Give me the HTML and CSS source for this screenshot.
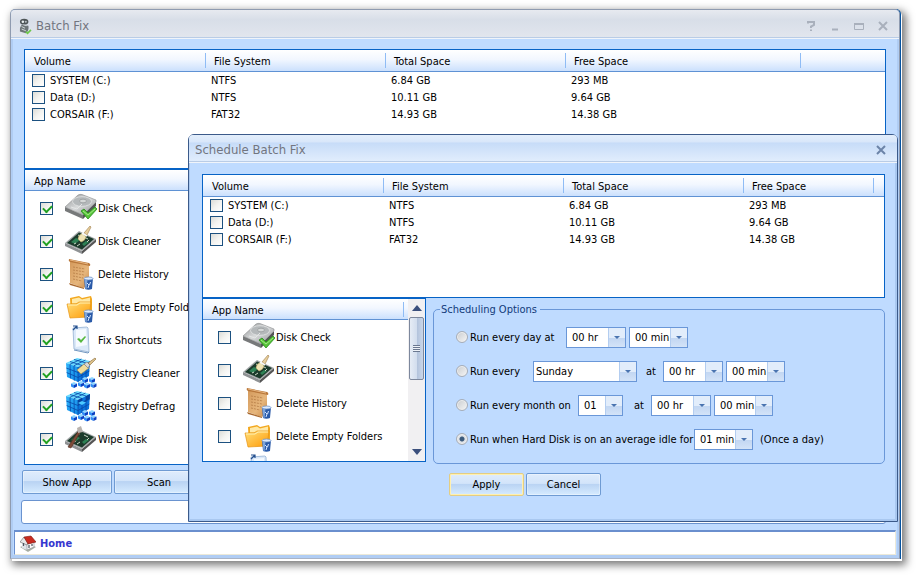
FILE: index.html
```html
<!DOCTYPE html>
<html lang="en">
<head>
<meta charset="UTF-8">
<title>Batch Fix</title>
<link rel="stylesheet" href="styles.css">
</head>
<body>
<!-- icon set -->
<svg class="sprite" aria-hidden="true">
    <defs>
        <linearGradient id="metal" x1="0" y1="0" x2="1" y2="1">
            <stop offset="0" stop-color="#8f9192"/><stop offset=".5" stop-color="#d8dadb"/><stop offset="1" stop-color="#8b8e90"/>
        </linearGradient>
        <linearGradient id="paper" x1="0" y1="0" x2="1" y2="1">
            <stop offset="0" stop-color="#d49a5c"/><stop offset=".6" stop-color="#e6b67c"/><stop offset="1" stop-color="#c98a4a"/>
        </linearGradient>
        <linearGradient id="gold" x1="0" y1="0" x2="1" y2="1">
            <stop offset="0" stop-color="#ffdf7a"/><stop offset="1" stop-color="#ff9a05"/>
        </linearGradient>
        <linearGradient id="cubeLeft" x1="0" y1="0" x2="1" y2="1">
            <stop offset="0" stop-color="#2fb4fa"/><stop offset="1" stop-color="#1288e6"/>
        </linearGradient>
        <g id="bin">
            <path d="M19 20h9l-1 11q-3.500 1.500-7 0z" fill="#2a5aa8"/>
            <path d="M19.500 22h3l-1 9h-1z" fill="#7ea6dc"/>
            <ellipse cx="23.500" cy="20.500" rx="4.500" ry="1.500" fill="#dcebff" stroke="#6f93c8" stroke-width=".8"/>
            <path d="M22 25l2 2-1 3M25.500 24l-1 3" stroke="#d4e6ff" fill="none"/>
        </g>
        <g id="smallcube">
            <path d="M0 1.500L3 0l3 1.500L3 3z" fill="#8fd6ff"/>
            <path d="M0 1.500L3 3v3L0 4.500z" fill="#2f8cf5"/>
            <path d="M6 1.500L3 3v3l3-1.500z" fill="#0c3fc0"/>
        </g>
        <g id="cubes">
            <path d="M1 6l11-5 13 3-12 6z" fill="#6cdcff"/>
            <path d="M1 6l12 4v15L2 20z" fill="url(#cubeLeft)"/>
            <path d="M13 10l12-6-1 15-11 6z" fill="#0b74dc"/>
            <path d="M5 7.300l.5 14M9 8.700l.3 15M1.300 11l11.700 4.500L24.700 9M1.600 15.500L13 20.500l11.400-6.500M17 8v15M21 6v15M5 4.500l12 4M9 2.500l12 3.500M5 7.300L16.500 2M9 8.700L20.500 3M13 10v15" stroke="#0848a8" stroke-width=".8" fill="none"/>
            <use href="#smallcube" x="17" y="20"/><use href="#smallcube" x="24" y="20"/>
            <use href="#smallcube" x="6" y="25"/><use href="#smallcube" x="13" y="24"/>
            <use href="#smallcube" x="19" y="25.500"/><use href="#smallcube" x="25.500" y="25"/>
        </g>
        <g id="board">
            <path d="M0 18l17 8v3L0 21z" fill="#8f9294"/>
            <path d="M17 26l14-12v3L17 29z" fill="#555"/>
            <path d="M0 18L14 6l17 8-14 12z" fill="#a5a9aa"/>
            <path d="M2 18L14 7.500 29 14 17 24.500z" fill="#1c3b2c"/>
            <path d="M6 17l5-4 4 2-5 4zM17 19l4-3 3 1-5 4z" fill="#2e8255"/>
            <path d="M9 19l2-1M12 21l3-2M19 12l4 2M13 10l2 1M22 17l2-2" stroke="#c9d6c4"/>
        </g>
    </defs>
    <symbol id="ic-check" viewBox="0 0 32 32">
        <path d="M0 15l18 8v4L0 19z" fill="#77797a"/>
        <path d="M18 23l13-13v4L18 27z" fill="#545657"/>
        <path d="M0 15L13 3q2-1 4-.500L31 8v2L18 23z" fill="url(#metal)" stroke="#8a8c8d" stroke-width=".6"/>
        <ellipse cx="17" cy="9.500" rx="9.500" ry="4.800" fill="#b4b8ba" stroke="#e6e8e8" stroke-width=".7"/>
        <ellipse cx="18" cy="9" rx="3.500" ry="1.800" fill="#d5d8d8" stroke="#8b8f91" stroke-width=".6"/>
        <path d="M6 15l6 2 5-5" stroke="#e4e6e6" fill="none"/>
        <path d="M16 19l3-2 4 4 7-6 2 2-9 10z" fill="#57c43a" stroke="#278a1c" stroke-width=".8"/>
        <path d="M18 19l5 4 7-6" stroke="#b6f09a" fill="none" stroke-width=".8"/>
    </symbol>
    <symbol id="ic-cleaner" viewBox="0 0 32 32">
        <use href="#board"/>
        <path d="M13 14q0-4 5-6l3 4q-1 4-5 5z" fill="#efe3b4" stroke="#b6a45f" stroke-width=".6"/>
        <path d="M19 8l6-7 1 1-4 8z" fill="#e8cf9c" stroke="#9c7b48" stroke-width=".6"/>
        <path d="M17 8l5 3" stroke="#fafafa" stroke-width="1.500"/>
    </symbol>
    <symbol id="ic-history" viewBox="0 0 32 32">
        <path d="M5 3l19 3v22l-6 2-13-5z" fill="url(#paper)"/>
        <path d="M4 1l20 4q2 1 1 3L5 4q-2-1-1-3z" fill="#b9783b"/>
        <path d="M5 2l18 4" stroke="#e8b680"/>
        <path d="M8 9l12 2M8 12l12 2M8 15l11 2M8 18l10 2M8 21l9 2" stroke="#b57c45" stroke-width=".8" stroke-dasharray="2 1"/>
        <path d="M4 25l15 5v1L5 27z" fill="#a9692f"/>
        <use href="#bin"/>
    </symbol>
    <symbol id="ic-folder" viewBox="0 0 32 32">
        <path d="M5 7l9-2 3 2 9-2 1 3v17L6 26z" fill="#f3a81f"/>
        <path d="M7 8l7-1.500 3 2 8-2v6H7z" fill="#ffe9a6"/>
        <path d="M2 13h9l3-2h12l-2 15L5 27z" fill="url(#gold)" stroke="#e79412" stroke-width=".7"/>
        <path d="M3 14h9l3-2h10" stroke="#fff2b5" fill="none"/>
        <use href="#bin"/>
    </symbol>
    <symbol id="ic-shortcut" viewBox="0 0 32 32">
        <path d="M8 4l14-1 1 1 1 24-15-3z" fill="#dbe9f9" stroke="#9eb9d8" stroke-width=".9"/>
        <path d="M11 6l10-1 1 16-11 2z" fill="#f5faff"/>
        <path d="M9 26l14 3 1-1" stroke="#6f95bf" fill="none"/>
        <path d="M8 2h4v3M12 2L8 6" stroke="#24508f" fill="none" stroke-width="1.200"/>
        <path d="M12 15l2-1 2 2 4-4 1 1-5 6z" fill="#55b840"/>
    </symbol>
    <symbol id="ic-regclean" viewBox="0 0 32 32">
        <use href="#cubes"/>
        <path d="M12 13l7-6 5 4-8 6z" fill="#f0dc9b" stroke="#a88d48" stroke-width=".6"/>
        <path d="M19 7l4 4 2-3-3-3z" fill="#d7d7d7" stroke="#777" stroke-width=".6"/>
        <path d="M23 6l7-5 1 1-6 6z" fill="#dcc18a" stroke="#8a6a38" stroke-width=".6"/>
    </symbol>
    <symbol id="ic-defrag" viewBox="0 0 32 32">
        <use href="#cubes"/>
        <path d="M13 10l4-2v4l4-2v-4l4-2-.3 5-11.700 6z" fill="#0644a0"/>
        <path d="M13 13l4-2 4 1.500-4 2.500z" fill="#4ccaff"/>
    </symbol>
    <symbol id="ic-wipe" viewBox="0 0 32 32">
        <use href="#board"/>
        <path d="M3 24L14 7l2 1L6 25z" fill="#7d4a38" stroke="#4f2b20" stroke-width=".6"/>
        <path d="M12 5l4-2 2 6-5 1z" fill="#b9b3ae"/>
    </symbol>
    <symbol id="ic-app" viewBox="0 0 16 20">
        <ellipse cx="7" cy="4.500" rx="5" ry="3.500" fill="#4e5557"/>
        <circle cx="5.500" cy="4.500" r="1.500" fill="#e8eeee"/>
        <circle cx="9" cy="4.500" r="1.200" fill="#b5bdbf"/>
        <path d="M4 8q-3 4-2 8l7 2q4-3 3-9z" fill="#6d7577"/>
        <path d="M4 10l4 2M4 13l5 2M6 8l4 1" stroke="#dfe5e6"/>
        <path d="M9 16l2 2 4-4" stroke="#6cc84a" stroke-width="2" fill="none"/>
    </symbol>
    <symbol id="ic-home" viewBox="0 0 16 17">
        <path d="M0 12l8-3 8 3-8 5z" fill="#a9b0a5"/>
        <path d="M2 6l5 3v6l-5-2z" fill="#dfe3e8"/>
        <path d="M7 9l7-2v5l-7 3z" fill="#fafafa" stroke="#8b8f94" stroke-width=".6"/>
        <path d="M0 7l4-5 4 6-1 2z" fill="#e7e7e7" stroke="#666" stroke-width=".6"/>
        <path d="M4 2l7-1 5 6-8 2z" fill="#c92b20" stroke="#7e150f" stroke-width=".6"/>
        <path d="M3.500 8v3M9 10v3M12 9v2" stroke="#4d545e" stroke-width="1.200"/>
    </symbol>
</svg>

<div class="window">
    <header class="titlebar">
        <svg class="app-icon"><use href="#ic-app"/></svg>
        <h1>Batch Fix</h1>
        <div class="winbtns">
            <button aria-label="Help"><svg viewBox="0 0 10 10"><path d="M2 2.500V1h6v3L5 5.500V7M5 8.500V10"/></svg></button>
            <button aria-label="Minimize"><svg viewBox="0 0 10 10"><path d="M2 8.500h6"/></svg></button>
            <button aria-label="Maximize"><svg viewBox="0 0 10 10"><path class="thin" d="M.5 2.500h9v6h-9z"/><path d="M0 3h10"/></svg></button>
            <button aria-label="Close"><svg viewBox="0 0 10 10"><path d="M1 1l8 8M9 1L1 9"/></svg></button>
        </div>
    </header>

    <main class="content">
        <div class="listbox volumes">
            <table>
                <colgroup><col class="c-name"><col class="c-info"><col class="c-info"><col class="c-wide"><col></colgroup>
                <thead><tr><th>Volume</th><th>File System</th><th>Total Space</th><th>Free Space</th><th></th></tr></thead>
                <tbody>
                    <tr><td><label><input type="checkbox">SYSTEM (C:)</label></td><td>NTFS</td><td>6.84 GB</td><td>293 MB</td><td></td></tr>
                    <tr><td><label><input type="checkbox">Data (D:)</label></td><td>NTFS</td><td>10.11 GB</td><td>9.64 GB</td><td></td></tr>
                    <tr><td><label><input type="checkbox">CORSAIR (F:)</label></td><td>FAT32</td><td>14.93 GB</td><td>14.38 GB</td><td></td></tr>
                </tbody>
            </table>
        </div>
        <div class="listbox apps">
            <div class="apphead">App Name</div>
            <label class="app"><input type="checkbox" checked><svg><use href="#ic-check"/></svg>Disk Check</label>
            <label class="app"><input type="checkbox" checked><svg><use href="#ic-cleaner"/></svg>Disk Cleaner</label>
            <label class="app"><input type="checkbox" checked><svg><use href="#ic-history"/></svg>Delete History</label>
            <label class="app"><input type="checkbox" checked><svg><use href="#ic-folder"/></svg>Delete Empty Folders</label>
            <label class="app"><input type="checkbox" checked><svg><use href="#ic-shortcut"/></svg>Fix Shortcuts</label>
            <label class="app"><input type="checkbox" checked><svg><use href="#ic-regclean"/></svg>Registry Cleaner</label>
            <label class="app"><input type="checkbox" checked><svg><use href="#ic-defrag"/></svg>Registry Defrag</label>
            <label class="app"><input type="checkbox" checked><svg><use href="#ic-wipe"/></svg>Wipe Disk</label>
        </div>
    </main>
    <div class="actions">
        <button class="btn large">Show App</button>
        <button class="btn large">Scan</button>
    </div>
    <div class="field"><input type="text" aria-label="Status"></div>
    <footer class="statusbar">
        <svg><use href="#ic-home"/></svg>
        <a href="#">Home</a>
    </footer>

    <section class="dialog" role="dialog" aria-labelledby="dlgTitle">
        <header class="titlebar">
            <h2 id="dlgTitle">Schedule Batch Fix</h2>
            <div class="winbtns">
                <button aria-label="Close"><svg viewBox="0 0 10 10"><path d="M1 1l8 8M9 1L1 9"/></svg></button>
            </div>
        </header>
        <div class="dialog-body">
            <div class="listbox volumes">
                <table>
                    <colgroup><col class="c-name"><col class="c-info"><col class="c-info"><col class="c-last"><col></colgroup>
                    <thead><tr><th>Volume</th><th>File System</th><th>Total Space</th><th>Free Space</th><th></th></tr></thead>
                    <tbody>
                        <tr><td><label><input type="checkbox">SYSTEM (C:)</label></td><td>NTFS</td><td>6.84 GB</td><td>293 MB</td><td></td></tr>
                        <tr><td><label><input type="checkbox">Data (D:)</label></td><td>NTFS</td><td>10.11 GB</td><td>9.64 GB</td><td></td></tr>
                        <tr><td><label><input type="checkbox">CORSAIR (F:)</label></td><td>FAT32</td><td>14.93 GB</td><td>14.38 GB</td><td></td></tr>
                    </tbody>
                </table>
            </div>
            <div class="lower">
                <div class="listbox apps">
                    <div class="applist">
                        <div class="apphead">App Name</div>
                        <label class="app"><input type="checkbox"><svg><use href="#ic-check"/></svg>Disk Check</label>
                        <label class="app"><input type="checkbox"><svg><use href="#ic-cleaner"/></svg>Disk Cleaner</label>
                        <label class="app"><input type="checkbox"><svg><use href="#ic-history"/></svg>Delete History</label>
                        <label class="app"><input type="checkbox"><svg><use href="#ic-folder"/></svg>Delete Empty Folders</label>
                        <div class="app"><svg class="lone"><use href="#ic-shortcut"/></svg></div>
                    </div>
                    <div class="scroll">
                        <div class="arrow up"></div>
                        <div class="thumb"><i></i></div>
                        <div class="arrow down"></div>
                    </div>
                </div>
                <fieldset>
                    <legend>Scheduling Options</legend>
                    <div class="opt">
                        <label class="w-day"><input type="radio" name="when">Run every day at</label>
                        <span class="combo hr"><select aria-label="Hour"><option>00 hr</option></select></span>
                        <span class="combo min"><select aria-label="Minute"><option>00 min</option></select></span>
                    </div>
                    <div class="opt">
                        <label class="w-week"><input type="radio" name="when">Run every</label>
                        <span class="combo weekday"><select aria-label="Weekday"><option>Sunday</option></select></span>
                        <span class="at">at</span>
                        <span class="combo hr"><select aria-label="Hour"><option>00 hr</option></select></span>
                        <span class="combo min"><select aria-label="Minute"><option>00 min</option></select></span>
                    </div>
                    <div class="opt">
                        <label class="w-month"><input type="radio" name="when">Run every month on</label>
                        <span class="combo date"><select aria-label="Day of month"><option>01</option></select></span>
                        <span class="at">at</span>
                        <span class="combo hr"><select aria-label="Hour"><option>00 hr</option></select></span>
                        <span class="combo min"><select aria-label="Minute"><option>00 min</option></select></span>
                    </div>
                    <div class="opt">
                        <label class="w-idle"><input type="radio" name="when" checked>Run when Hard Disk is on an average idle for</label>
                        <span class="combo min"><select aria-label="Idle time"><option>01 min</option></select></span>
                        <span class="note">(Once a day)</span>
                    </div>
                </fieldset>
            </div>
            <div class="dialog-actions">
                <button class="btn primary">Apply</button>
                <button class="btn">Cancel</button>
            </div>
        </div>
    </section>
</div>
</body>
</html>
```
FILE: styles.css
```css
* {
    box-sizing: border-box;
}
body {
    margin: 0;
    padding: 9px 16px 16px 10px;
    background: #fff;
    font: 11px/13px Tahoma, "DejaVu Sans Condensed", sans-serif;
    color: #000;
}
.sprite {
    position: absolute;
    width: 0;
    height: 0;
}
input, select, button {
    font: inherit;
    color: inherit;
    margin: 0;
}

/* window frame */
.window {
    position: relative;
    background: #bfdbff;
    border: 1px solid #8f9bb0;
    border-bottom-color: #a9b4c6;
    border-radius: 5px 5px 0 0;
    padding-bottom: 3px;
    box-shadow: inset 2px -3px 0 #b0cdf4, inset -2px 0 0 #b0cdf4, 1px 0 0 #05529f, 2px 2px 0 #fff, 4px 4px 9px 2px #777;
}
.titlebar {
    display: flex;
    align-items: center;
    height: 29px;
    padding: 4px 11px 0 7px;
    background: linear-gradient(#e7eaf0, #d8dee8 35%, #e2e6ee);
    border-bottom: 1px solid #f0f4fa;
    border-radius: 4px 4px 0 0;
    box-shadow: inset 0 -1px 0 #b9cce6;
    color: #72757f;
}
.titlebar h1, .titlebar h2 {
    margin: 0;
    font-size: 13px;
    font-weight: normal;
    line-height: 16px;
}
.app-icon {
    width: 14px;
    height: 17px;
    margin-right: 4px;
}
.winbtns {
    display: flex;
    gap: 14px;
    margin-left: auto;
}
.winbtns button {
    width: 10px;
    height: 10px;
    padding: 0;
    border: 0;
    background: none;
    display: flex;
}
.winbtns svg {
    width: 10px;
    height: 10px;
    fill: none;
    stroke: #a9b0bc;
    stroke-width: 2;
}
.winbtns .thin {
    stroke-width: 1;
}

/* lists */
.content {
    margin: 10px 13px 0;
}
.listbox {
    background: #fff;
    border: 1px solid #0763c6;
    overflow: hidden;
}
.volumes {
    height: 120px;
}
.content .apps {
    height: 296px;
}
table {
    width: 100%;
    table-layout: fixed;
    border-collapse: collapse;
}
.c-name { width: 181px; }
.c-info { width: 180px; }
.c-wide { width: 235px; }
.c-last { width: 130px; }
thead tr, .apphead {
    background: linear-gradient(#fff, #f2f7ff 45%, #cbe0fd);
}
th {
    height: 21px;
    padding: 2px 8px 0;
    border-bottom: 1px solid #5f92d4;
    font-weight: normal;
    text-align: left;
    background: linear-gradient(#8fbcf5, #8fbcf5) right 3px / 1px 15px no-repeat;
}
th:first-child {
    padding-left: 9px;
}
th:last-child {
    background: none;
}
td {
    height: 17px;
    padding: 2px 5px 0;
}
td:first-child {
    padding-left: 7px;
}
td label {
    display: flex;
    align-items: center;
    gap: 5px;
}
input[type="checkbox"] {
    appearance: none;
    flex: none;
    width: 13px;
    height: 13px;
    border: 1px solid #1c5180;
    background: linear-gradient(135deg, #dcdcd7, #f3f3f0 50%, #fff);
    position: relative;
}
input[type="checkbox"]:checked::after {
    content: "";
    position: absolute;
    left: 2px;
    top: 2px;
    width: 7px;
    height: 4px;
    border: solid #21a121;
    border-width: 0 0 2px 2px;
    transform: rotate(-45deg);
}
.apphead {
    height: 21px;
    padding: 5px 9px 0;
    border-bottom: 1px solid #5f92d4;
}
.app {
    display: flex;
    align-items: center;
    height: 33px;
    padding: 1px 0 0 15px;
    white-space: nowrap;
}
.app svg {
    flex: none;
    width: 32px;
    height: 32px;
    margin-left: 12px;
    margin-right: 1px;
}
.app .lone {
    margin-left: 25px;
}

/* buttons and bars */
.actions {
    display: flex;
    gap: 2px;
    margin: 5px 11px 0;
}
.btn {
    width: 75px;
    height: 23px;
    padding: 0;
    border: 1px solid #6f9bd3;
    border-radius: 2px;
    background: linear-gradient(#dfecfc, #d2e4fa 45%, #b9d3f3 48%, #d6ebff);
    box-shadow: inset 0 0 0 1px rgba(255,255,255,0.35);
}
.btn.large {
    width: 90px;
    height: 24px;
}
.btn.primary {
    border-color: #e3cd84;
    box-shadow: inset 0 0 0 1px #fff0b0;
}
.field {
    margin: 6px 13px 0 10px;
}
.field input {
    display: block;
    width: 100%;
    height: 24px;
    border: 1px solid #6a93cf;
    border-radius: 3px;
    background: #fff;
}
.statusbar {
    display: flex;
    align-items: center;
    gap: 4px;
    height: 25px;
    margin: 6px 3px 0;
    padding-left: 5px;
    background: #fff;
    border: 1px solid #ece9d8;
    border-top: 2px solid #6a8fce;
    border-left-color: #6a8fce;
}
.statusbar svg {
    width: 16px;
    height: 17px;
}
.statusbar a {
    color: #3636cf;
    font-weight: bold;
    text-decoration: none;
}

/* schedule dialog, floats over the main window */
.dialog {
    position: absolute;
    left: 177px;
    right: 1px;
    top: 124px;
    background: #bfdbff;
    border: 1px solid #3b5a8a;
    border-radius: 6px 6px 0 0;
    box-shadow: inset 1px -2px 0 #a9c8f0, inset -2px 0 0 #a9c8f0;
}
.dialog .titlebar {
    height: 28px;
    padding: 2px 11px 0 6px;
    background: linear-gradient(#e3eefb, #d9e7fa 25%, #c7dcf8 30%, #e2eefd);
}
.dialog .winbtns svg {
    stroke: #6c84a8;
}
.dialog-body {
    padding: 11px 12px 25px 13px;
}
.dialog .volumes {
    height: 124px;
}
.lower {
    display: flex;
    gap: 7px;
}
.dialog .apps {
    display: flex;
    flex: none;
    width: 224px;
    height: 164px;
}
.applist {
    flex: 1;
    overflow: hidden;
}
.dialog .apphead {
    background: linear-gradient(#8fbcf5, #8fbcf5) right 4px top 3px / 1px 15px no-repeat, linear-gradient(#fff, #f2f7ff 45%, #cbe0fd);
}
.scroll {
    display: flex;
    flex-direction: column;
    align-items: center;
    width: 17px;
    background: #f1f0f2;
}
.arrow {
    height: 12px;
    border: 5px solid transparent;
    border-top-width: 6px;
    border-bottom-width: 6px;
}
.arrow.up {
    border-bottom-color: #3b4f7c;
    margin-bottom: 6px;
}
.arrow.down {
    border-top-color: #3b4f7c;
    margin-top: auto;
}
.thumb {
    display: flex;
    align-items: center;
    justify-content: center;
    width: 15px;
    height: 63px;
    border: 1px solid #7d889d;
    border-radius: 2px;
    background: linear-gradient(90deg, #e6ecf5, #d3deee 50%, #b3c3dc 55%, #cad7e9);
}
.thumb i {
    width: 7px;
    height: 7px;
    background: repeating-linear-gradient(#6b7890 0 1px, #eef2f8 1px 2px);
}

fieldset {
    flex: 1;
    min-width: 0;
    height: 161px;
    margin: 5px 0 0;
    padding: 4px 0 0 22px;
    border: 1px solid #6a97d8;
    border-radius: 5px;
}
legend {
    margin-left: -16px;
    padding: 0 3px 0 1px;
    color: #123a7a;
}
.opt {
    display: flex;
    align-items: center;
    height: 34px;
    white-space: nowrap;
}
.opt label {
    display: flex;
    align-items: center;
    gap: 2px;
}
.w-day { width: 110px; }
.w-week { width: 77px; }
.w-month { width: 122px; }
.w-idle { width: 238px; }
input[type="radio"] {
    appearance: none;
    flex: none;
    width: 12px;
    height: 12px;
    border: 1px solid #a6adb8;
    border-radius: 50%;
    background: linear-gradient(135deg, #c9cccf, #f6f6f6);
    box-shadow: inset 0 0 0 1px #eee;
}
input[type="radio"]:checked {
    background: radial-gradient(#3b5a7c 2px, #dfe3e8 3px);
}
.combo {
    position: relative;
    height: 21px;
}
.combo select {
    appearance: none;
    display: block;
    width: 100%;
    height: 100%;
    padding: 0 0 0 5px;
    border: 1px solid #6a97d8;
    border-radius: 0;
    background: #fff;
}
/* drop-down arrow */
.combo::before {
    content: "";
    position: absolute;
    right: 1px;
    top: 1px;
    bottom: 1px;
    width: 16px;
    border-left: 1px solid #b3cdf0;
    background: linear-gradient(#e2edfb 50%, #c3d7f2 55%, #d3e3f8);
    pointer-events: none;
}
.combo::after {
    content: "";
    position: absolute;
    right: 6px;
    top: 9px;
    border: 3px solid transparent;
    border-top-color: #4a74b0;
    border-bottom: 0;
    pointer-events: none;
}
.hr { width: 60px; margin-right: 3px; }
.min { width: 59px; }
.date { width: 45px; margin-right: 2px; }
.weekday { width: 104px; }
.weekday select {
    padding-left: 2px;
}
.at {
    width: 26px;
    padding-left: 9px;
}
.note {
    margin-left: 7px;
}
.dialog-actions {
    display: flex;
    gap: 2px;
    margin: 9px 0 0 247px;
}
```
